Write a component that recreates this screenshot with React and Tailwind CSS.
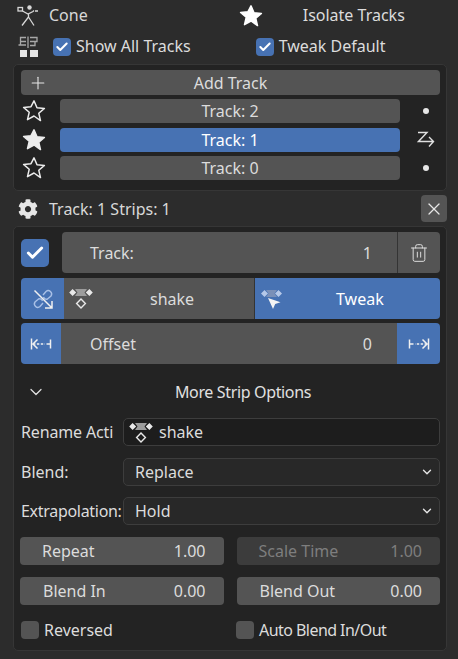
import React from "react";
import { Plus, X, Trash2, ChevronDown, Check } from "lucide-react";
import { FaCog } from "react-icons/fa";

const STAR = "M12 1.8l3 6.9 7.4.7-5.6 4.9 1.7 7.3L12 17l-6.5 3.6 1.7-7.3-5.6-4.9 7.4-.7z";

function Star({ filled, className }) {
  return (
    <svg viewBox="0 0 24 24" className={className} fill={filled ? "currentColor" : "none"} stroke="currentColor" strokeWidth="1.5" strokeLinejoin="round">
      <path d={STAR} />
    </svg>
  );
}

// action strip glyph: two keyframes joined by a bar, one keyframe under it
function ActionIcon({ className }) {
  return (
    <svg viewBox="0 0 24 22" className={className} fill="none">
      <path d="M6 2 L18 2 L15.5 5.5 L18 9 L6 9 L8.5 5.5 Z" fill="#9c9c9c" />
      <path d="M3.6 2 L7.2 5.5 L3.6 9 L0.2 5.5 Z M20.4 2 L23.8 5.5 L20.4 9 L16.8 5.5 Z" fill="#e8e8e8" />
      <path d="M12 12 L16.4 16.5 L12 21 L7.6 16.5 Z" stroke="#e8e8e8" strokeWidth="1.4" />
    </svg>
  );
}

function TweakIcon({ className }) {
  return (
    <svg viewBox="0 0 22 20" className={className} fill="none">
      <path d="M5 1 L16 1 L13.5 4.5 L16 8 L5 8 L7.5 4.5 Z" fill="#7a90b8" />
      <path d="M3.5 1 L7 4.5 L3.5 8 L0 4.5 Z M17.5 1 L21 4.5 L17.5 8 L14 4.5 Z" fill="#b5c8e8" />
      <path d="M7 9 L19.5 13.2 L14.2 15 L12 20 Z" fill="#f4f4f4" />
    </svg>
  );
}

function ArmatureIcon({ className }) {
  return (
    <svg viewBox="0 0 22 22" className={className} fill="none" stroke="#d8d8d8" strokeWidth="1.3">
      <rect x="1" y="2.5" width="4.5" height="3.5" />
      <circle cx="12.5" cy="2.5" r="2.2" fill="#d8d8d8" stroke="none" />
      <path d="M5.5 6 L11 9 L16 6.5 L17 5.5 M18 6 L21 6 M11.5 9 L11.5 12 L5 20.5 M11.5 12 L17 20.5" />
    </svg>
  );
}

function NlaIcon({ className }) {
  return (
    <svg viewBox="0 0 22 22" className={className} fill="none" stroke="#a8a8a8" strokeWidth="1.3">
      <path d="M9 1.5 H3.5 V5.5 H9 M1.5 9 H9 M3.5 5.5 V9" />
      <path d="M11 0.5 V12" />
      <path d="M13 1.5 H20 V5.5 H13 M13 9.5 H18 V5.5" />
      <rect x="3" y="14" width="7" height="7" fill="#e6e6e6" stroke="none" />
      <rect x="13" y="14" width="8" height="7" fill="#e6e6e6" stroke="none" />
    </svg>
  );
}

function UnlinkIcon({ className }) {
  return (
    <svg viewBox="0 0 22 22" className={className} fill="none" strokeWidth="1.4">
      <path d="M11 7 L14 3.5 A3.4 3.4 0 0 1 19 8 L15.5 11 A3 3 0 0 1 11.5 9" stroke="#a9c0e6" />
      <path d="M11 15 L8 18.5 A3.4 3.4 0 0 1 3 14 L6.5 11 A3 3 0 0 1 10.5 13" stroke="#a9c0e6" />
      <path d="M2.5 2.5 L20 20 M20 13 V20 H13" stroke="#f0f0f0" strokeWidth="1.5" />
    </svg>
  );
}

function SwapIcon({ className }) {
  return (
    <svg viewBox="0 0 18 18" className={className} fill="none" stroke="#e0e0e0" strokeWidth="1.4">
      <path d="M1 1.5 H10 L1.5 10.5 H16.5 M12 6 L16.5 10.5 L12 15.5" />
    </svg>
  );
}

function OffsetStart({ className }) {
  return (
    <svg viewBox="0 0 22 14" className={className} fill="none" stroke="#f0f0f0" strokeWidth="1.5">
      <path d="M1.5 1.5 V12.5 M7.5 2.5 L3 7 L7.5 11.5" />
      <path d="M3 7 H15" strokeDasharray="2.4 1.5" />
      <path d="M20.5 2.5 V11.5 M16.5 7 H20.5" />
    </svg>
  );
}

function OffsetEnd({ className }) {
  return (
    <svg viewBox="0 0 22 14" className={className} fill="none" stroke="#f0f0f0" strokeWidth="1.5">
      <path d="M20.5 1.5 V12.5 M14.5 2.5 L19 7 L14.5 11.5" />
      <path d="M19 7 H7" strokeDasharray="2.4 1.5" />
      <path d="M1.5 2.5 V11.5 M5.5 7 H1.5" />
    </svg>
  );
}

function CheckBox({ label, checked, className = "", labelClass = "" }) {
  return (
    <div className={`flex items-center gap-[5px] ${className}`}>
      <div className={`w-[18px] h-[18px] rounded-[4px] flex items-center justify-center ${checked ? "bg-[#4772b3]" : "bg-[#545454]"}`}>
        {checked && <Check size={14} strokeWidth={3.5} className="text-white" />}
      </div>
      <span className={labelClass}>{label}</span>
    </div>
  );
}

function TrackRow({ n, active, side }) {
  return (
    <div className="flex items-center h-[24px] text-[#dcdcdc]">
      <div className="w-[39px] flex pl-[1px]">
        <Star filled={active} className="w-[24px] h-[24px] text-[#ececec]" />
      </div>
      <div className={`w-[340px] h-full rounded-[4px] flex items-center justify-center ${active ? "bg-[#4772b3] text-white" : "bg-[#545454]"}`}>
        Track: {n}
      </div>
      <div className="flex-1 flex justify-center pl-[12px]">{side}</div>
    </div>
  );
}

function NumField({ label, value, dim, pl }) {
  return (
    <div className={`flex-1 h-[28px] rounded-[4px] flex items-center justify-between pr-[18px] ${pl} ${dim ? "bg-[#3c3c3c] text-[#7e7e7e]" : "bg-[#545454] text-[#dcdcdc]"}`}>
      <span>{label}</span>
      <span>{value}</span>
    </div>
  );
}

function Labeled({ label, children, className = "", labelClass = "" }) {
  return (
    <div className={`flex items-center ${className}`}>
      <span className={`w-[102px] shrink-0 whitespace-nowrap ${labelClass}`}>{label}</span>
      {children}
    </div>
  );
}

function Select({ value }) {
  return (
    <div className="flex-1 h-[28px] rounded-[5px] border border-[#3d3d3d] bg-[#282828] flex items-center justify-between pl-[11px] pr-[5px]">
      <span>{value}</span>
      <ChevronDown size={14} strokeWidth={2.4} className="text-[#e6e6e6]" />
    </div>
  );
}

export default function App() {
  return (
    <div className="w-[458px] h-[659px] overflow-hidden bg-[#2c2c2c] text-[#e0e0e0] text-[16px] leading-none pl-[13px] pr-[11px] pt-[5px]" style={{ fontFamily: '"Noto Sans", sans-serif' }}>
      {/* object row */}
      <div className="flex items-center h-[21px]">
        <ArmatureIcon className="w-[22px] h-[22px] ml-[4px]" />
        <span className="ml-[10px] mb-[2px] text-[#d8d8d8]">Cone</span>
        <Star filled className="w-[24px] h-[24px] ml-[151px] text-white" />
        <span className="ml-[40px] mb-[2px] text-[#dcdcdc]">Isolate Tracks</span>
      </div>
      <div className="flex items-center h-[21px] mt-[10px]">
        <NlaIcon className="w-[22px] h-[22px] ml-[4px]" />
        <CheckBox label="Show All Tracks" checked labelClass="mb-[2px]" className="ml-[14px] text-[#dcdcdc]" />
        <CheckBox label="Tweak Default" checked labelClass="mb-[2px]" className="ml-[65px] text-[#dcdcdc]" />
      </div>

      {/* track list */}
      <div className="mt-[7px] h-[127px] rounded-[5px] bg-[#232323] border border-[#363636] pl-[7px] pr-[6px] pt-[5px]">
        <div className="relative h-[25px] rounded-[4px] bg-[#545454] flex items-center justify-center text-[#dcdcdc]">
          <Plus size={20} strokeWidth={1.3} className="absolute left-[7px] text-[#e6e6e6]" />
          Add Track
        </div>
        <div className="flex flex-col gap-[4.5px] mt-[4px]">
          <TrackRow n={2} side={<div className="w-[6px] h-[6px] rounded-full bg-[#e6e6e6]" />} />
          <TrackRow n={1} active side={<SwapIcon className="w-[18px] h-[18px]" />} />
          <TrackRow n={0} side={<div className="w-[6px] h-[6px] rounded-full bg-[#e6e6e6]" />} />
        </div>
      </div>

      {/* strip header */}
      <div className="flex items-center h-[35px]">
        <FaCog size={20} className="ml-[5px] text-[#e6e6e6]" />
        <span className="ml-[11px] text-[#d8d8d8]">Track: 1 Strips: 1</span>
        <div className="ml-auto w-[26px] h-[27px] rounded-[4px] bg-[#545454] flex items-center justify-center">
          <X size={20} strokeWidth={1.5} className="text-[#e6e6e6]" />
        </div>
      </div>

      {/* strip panel */}
      <div className="h-[425px] rounded-[5px] bg-[#232323] border border-[#363636] pl-[7px] pr-[6px] pt-[5px] text-[#dcdcdc]">
        <div className="flex items-center h-[41px]">
          <div className="w-[28px] h-[28px] rounded-[5px] bg-[#4772b3] flex items-center justify-center">
            <Check size={20} strokeWidth={3.5} className="text-white" />
          </div>
          <div className="ml-[13px] flex-1 h-full rounded-[4px] bg-[#545454] flex items-center overflow-hidden">
            <span className="ml-[28px]">Track:</span>
            <span className="ml-auto mr-[25px]">1</span>
            <div className="w-[43px] h-full border-l border-[#343434] flex items-center justify-center">
              <Trash2 size={20} strokeWidth={1.2} className="text-[#dcdcdc]" />
            </div>
          </div>
        </div>

        <div className="flex h-[41px] mt-[5px] rounded-[4px] overflow-hidden">
          <div className="w-[43px] bg-[#4772b3] flex items-center justify-center">
            <UnlinkIcon className="w-[22px] h-[22px]" />
          </div>
          <div className="w-[191px] bg-[#545454] flex items-center border-r border-[#343434]">
            <ActionIcon className="w-[24px] h-[22px] ml-[5px] mb-[1px]" />
            <span className="ml-[57px]">shake</span>
          </div>
          <div className="flex-1 bg-[#4772b3] text-white flex items-center">
            <TweakIcon className="w-[22px] h-[20px] ml-[6px]" />
            <span className="ml-[53px]">Tweak</span>
          </div>
        </div>

        <div className="flex h-[41px] mt-[4px] rounded-[4px] overflow-hidden">
          <div className="w-[40px] bg-[#4772b3] flex items-center justify-center">
            <OffsetStart className="w-[22px] h-[14px]" />
          </div>
          <div className="flex-1 bg-[#545454] flex items-center">
            <span className="ml-[29px]">Offset</span>
            <span className="ml-auto mr-[25px]">0</span>
          </div>
          <div className="w-[43px] bg-[#4772b3] flex items-center justify-center">
            <OffsetEnd className="w-[22px] h-[14px]" />
          </div>
        </div>

        <div className="relative flex items-center justify-center h-[20px] mt-[18px] pl-[25px] text-[#e0e0e0] tracking-[-0.35px]">
          <ChevronDown size={20} strokeWidth={1.5} className="absolute left-[5px]" />
          More Strip Options
        </div>

        <Labeled label="Rename Acti" className="mt-[16px]" labelClass="tracking-[-0.15px]">
          <div className="flex-1 h-[28px] rounded-[5px] border border-[#3d3d3d] bg-[#1d1d1d] flex items-center">
            <ActionIcon className="w-[24px] h-[22px] ml-[5px]" />
            <span className="ml-[6px]">shake</span>
          </div>
        </Labeled>
        <Labeled label="Blend:" className="mt-[12px]"><Select value="Replace" /></Labeled>
        <Labeled label="Extrapolation:" className="mt-[11px]" labelClass="tracking-[-0.3px]"><Select value="Hold" /></Labeled>

        <div className="flex gap-[13px] mt-[12px] -ml-[1px]">
          <NumField label="Repeat" value="1.00" pl="pl-[22px]" />
          <NumField label="Scale Time" value="1.00" pl="pl-[22px]" dim />
        </div>
        <div className="flex gap-[13px] mt-[12px] -ml-[1px]">
          <NumField label="Blend In" value="0.00" pl="pl-[23px]" />
          <NumField label="Blend Out" value="0.00" pl="pl-[23px]" />
        </div>
        <div className="flex mt-[16px]">
          <CheckBox label="Reversed" className="w-[215px]" />
          <CheckBox label="Auto Blend In/Out" labelClass="tracking-[-0.55px]" />
        </div>
      </div>
    </div>
  );
}
